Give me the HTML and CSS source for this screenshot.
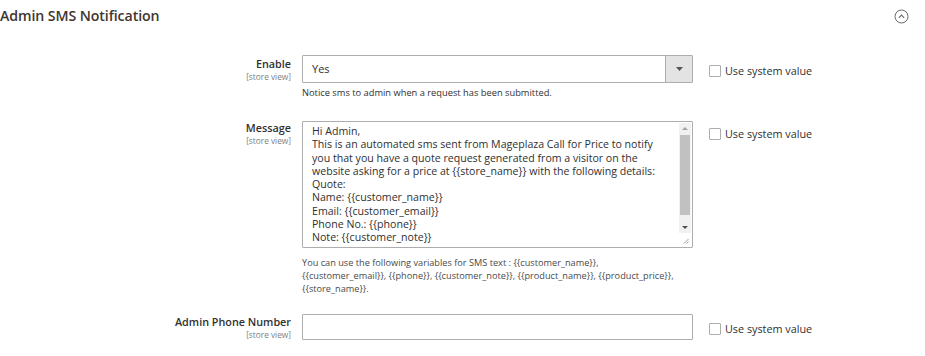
FILE: index.html
```html
<!DOCTYPE html>
<html>
<head>
<meta charset="utf-8">
<link rel="stylesheet" href="styles.css">
</head>
<body>
<div class="section-head">
  <h2 class="title">Admin SMS Notification</h2>
  <span class="collapse">
    <svg width="15" height="15" viewBox="0 0 15 15"><circle cx="7.5" cy="7.5" r="6.5" fill="none" stroke="#6b6b6b" stroke-width="1"/><path d="M4.8 8.8 L7.5 6.1 L10.2 8.8" fill="none" stroke="#6b6b6b" stroke-width="1.1"/></svg>
  </span>
</div>

<div class="row row-enable">
  <div class="label"><span class="lname">Enable</span><span class="scope">[store view]</span></div>
  <div class="control">
    <div class="select"><span class="sval">Yes</span><span class="sarrow"><svg width="7" height="4" viewBox="0 0 7 4"><path d="M0 0 L7 0 L3.5 4 Z" fill="#555"/></svg></span></div>
    <div class="note">Notice sms to admin when a request has been submitted.</div>
  </div>
  <label class="usesys"><span class="cb"></span>Use system value</label>
</div>

<div class="row row-message">
  <div class="label"><span class="lname">Message</span><span class="scope">[store view]</span></div>
  <div class="control">
    <div class="textarea">
      <div class="tatext">Hi Admin,<br>This is an automated sms sent from Mageplaza Call for Price to notify you that you have a quote request generated from a visitor on the website asking for a price at {{store_name}} with the following details:<br>Quote:<br>Name: {{customer_name}}<br>Email: {{customer_email}}<br>Phone No.: {{phone}}<br>Note: {{customer_note}}</div>
      <div class="scrollbar">
        <span class="sb-up"></span>
        <span class="sb-thumb"></span>
        <span class="sb-down"></span>
      </div>
      <svg class="grip" width="6" height="6" viewBox="0 0 6 6"><path d="M5.5 1 L1 5.5 M5.5 3.5 L3.5 5.5" stroke="#888" stroke-width="0.8"/></svg>
    </div>
    <div class="comment">You can use the following variables for SMS text : {{customer_name}},<br>{{customer_email}}, {{phone}}, {{customer_note}}, {{product_name}}, {{product_price}},<br>{{store_name}}.</div>
  </div>
  <label class="usesys"><span class="cb"></span>Use system value</label>
</div>

<div class="row row-phone">
  <div class="label"><span class="lname">Admin Phone Number</span><span class="scope">[store view]</span></div>
  <div class="control">
    <div class="input"></div>
  </div>
  <label class="usesys"><span class="cb"></span>Use system value</label>
</div>
</body>
</html>
```

FILE: styles.css
```css
* { box-sizing: border-box; }
body {
  margin: 0;
  background: #fff;
  font-family: "Open Sans", "Liberation Sans", sans-serif;
  color: #303030;
  width: 925px;
  height: 356px;
  overflow: hidden;
}
.section-head {
  display: flex;
  justify-content: space-between;
  align-items: center;
  height: 31px;
  padding: 0 16px 0 0;
}
.title {
  margin: 0;
  font-size: 14.2px;
  font-weight: 600;
  color: #41362f;
  letter-spacing: -0.1px;
}
.collapse { display: flex; margin-top: 2px; }
.row {
  display: grid;
  grid-template-columns: 291px 391px auto;
  column-gap: 11px;
  align-items: start;
}
.row .usesys { margin-left: 5px; }
.row-enable { margin-top: 24px; }
.row-message { margin-top: 22px; }
.row-phone { margin-top: 19px; }
.label {
  display: flex;
  flex-direction: column;
  align-items: flex-end;
  text-align: right;
  padding-top: 2px;
}
.lname {
  font-size: 10.8px;
  font-weight: 600;
  color: #303030;
  line-height: 14px;
}
.scope {
  font-size: 8.3px;
  color: #808080;
  line-height: 11px;
}
.select {
  display: flex;
  height: 28px;
  border: 1px solid #adadad;
  border-radius: 1px;
}
.sval {
  flex: 1;
  font-size: 11px;
  line-height: 26px;
  padding-left: 9px;
  color: #303030;
}
.sarrow {
  width: 27px;
  background: #e3e3e3;
  border-left: 1px solid #adadad;
  display: flex;
  align-items: center;
  justify-content: center;
}
.note {
  font-size: 9.3px;
  color: #303030;
  margin-top: 4px;
  line-height: 12px;
}
.usesys {
  display: flex;
  align-items: center;
  font-size: 10.8px;
  color: #303030;
  padding-top: 8px;
}
.row-message .usesys { padding-top: 5px; }
.row-message .label { padding-top: 0; }
.cb {
  width: 12px;
  height: 12px;
  border: 1px solid #adadad;
  border-radius: 1px;
  margin-right: 4px;
  background: #fff;
}
.textarea {
  position: relative;
  height: 127px;
  border: 1px solid #adadad;
  border-radius: 1px;
  padding: 3px 14px 0 9px;
  overflow: hidden;
}
.tatext {
  font-size: 10.6px;
  line-height: 13.3px;
  color: #303030;
  padding-right: 10px;
}
.scrollbar {
  position: absolute;
  top: 1px;
  right: 1px;
  bottom: 14px;
  width: 12px;
  background: #f1f1f1;
}
.sb-up, .sb-down {
  position: absolute;
  left: 3px;
  width: 0; height: 0;
  border-left: 3px solid transparent;
  border-right: 3px solid transparent;
}
.sb-up { top: 4px; border-bottom: 3px solid #a3a3a3; }
.sb-down { bottom: 4px; border-top: 3px solid #505050; }
.sb-thumb {
  position: absolute;
  top: 12px;
  left: 1px;
  right: 1px;
  height: 80px;
  background: #c1c1c1;
}
.grip { position: absolute; right: 3px; bottom: 3px; }
.comment {
  font-size: 9.2px;
  color: #4a4a4a;
  line-height: 13px;
  margin-top: 8px;
}
.row-phone .label { padding-top: 1px; }
.row-phone .usesys { padding-top: 7px; }
.input {
  height: 26px;
  border: 1px solid #adadad;
  border-radius: 1px;
}
```
